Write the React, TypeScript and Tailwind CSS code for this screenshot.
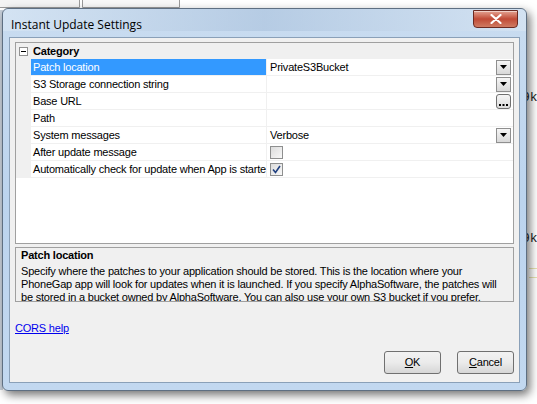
import React from 'react';

const rows = [
  { label: 'Patch location', value: 'PrivateS3Bucket', kind: 'drop', selected: true },
  { label: 'S3 Storage connection string', value: '', kind: 'drop' },
  { label: 'Base URL', value: '', kind: 'dots' },
  { label: 'Path', value: '', kind: 'none' },
  { label: 'System messages', value: 'Verbose', kind: 'drop' },
  { label: 'After update message', value: '', kind: 'check' },
  { label: 'Automatically check for update when App is started', value: '', kind: 'checked' },
];

const description = [
  'Specify where the patches to your application should be stored. This is the location where your',
  'PhoneGap app will look for updates when it is launched. If you specify AlphaSoftware, the patches will',
  'be stored in a bucket owned by AlphaSoftware. You can also use your own S3 bucket if you prefer.',
];

function DropButton() {
  return (
    <div className="ml-auto mr-[2px] flex h-[15px] w-[15px] items-center justify-center border border-[#8f8f8f] bg-gradient-to-b from-[#f6f6f6] to-[#d8d8d8]">
      <svg width="7" height="4" viewBox="0 0 7 4">
        <path d="M0 0h7L3.5 4z" fill="#000" />
      </svg>
    </div>
  );
}

function DotsButton() {
  return (
    <div className="ml-auto mr-[2px] flex h-[15px] w-[15px] items-end justify-center rounded-[3px] border border-[#707070] bg-gradient-to-b from-[#f6f6f6] to-[#dcdcdc] pb-[2px]">
      <svg width="9" height="2" viewBox="0 0 9 2">
        <rect x="0" y="0" width="2" height="2" fill="#000" />
        <rect x="3.5" y="0" width="2" height="2" fill="#000" />
        <rect x="7" y="0" width="2" height="2" fill="#000" />
      </svg>
    </div>
  );
}

function CheckBox({ checked }: { checked?: boolean }) {
  return (
    <div className="flex h-[13px] w-[13px] items-center justify-center border border-[#8e8f8f] bg-gradient-to-br from-[#dcdcdc] to-[#f8f8f8]">
      {checked && (
        <svg width="9" height="9" viewBox="0 0 9 9">
          <path d="M1 4.5l2.5 3L8 1" stroke="#1f3f7f" strokeWidth="1.6" fill="none" />
        </svg>
      )}
    </div>
  );
}

export default function App() {
  return (
    <div className="relative h-[404px] w-[537px] overflow-hidden bg-white text-[11px] tracking-[-0.2px] text-black [font-family:'Liberation_Sans',Arial,sans-serif]">
      {/* background tabs */}
      <div className="absolute left-[-2px] top-[-6px] h-[14px] w-[82px] rounded-t-[3px] border border-[#9a9a9a] bg-[#f4f4f4]" />
      <div className="absolute left-[82px] top-[-4px] h-[12px] w-[98px] rounded-t-[3px] border border-[#9a9a9a] bg-[#f8f8f8]" />
      <div className="absolute left-0 top-[10px] h-[380px] w-[3px] bg-[#c8d0da]" />

      {/* background app text on the right, partly under the window */}
      <div className="absolute left-[522px] top-[88px] text-[13px] tracking-normal text-[#222] [font-family:'Liberation_Mono',monospace]">9k</div>
      <div className="absolute left-[522px] top-[229px] text-[13px] tracking-normal text-[#222] [font-family:'Liberation_Mono',monospace]">9k</div>
      <div className="absolute left-[529px] top-[268px] h-[10px] w-[10px] border-y border-[#e8e4b0]" />

      {/* window */}
      <div className="absolute left-[2px] top-[8px] flex h-[383px] w-[525px] flex-col rounded-[6px] border border-[#5e6f82] bg-gradient-to-b from-[#c9dcf0] via-[#bcd4ee] to-[#c2d8f0] px-[6px] pb-[7px] shadow-[3px_4px_10px_rgba(0,0,0,0.55)]">
        {/* title bar */}
        <div className="relative flex h-[28px] shrink-0 items-center pl-[2px] pt-[3px]">
          <div className="absolute inset-x-[-6px] top-0 h-[22px] rounded-t-[6px] bg-gradient-to-r from-[#d8e6f4] via-[#aec5df] to-[#d7e5f3] opacity-70" />
          <span className="relative text-[12px] tracking-normal text-[#000] [font-family:'Open_Sans','Liberation_Sans',sans-serif]">Instant Update Settings</span>
          <div className="absolute right-[2px] top-[1px] flex h-[18px] w-[45px] items-center justify-center rounded-b-[4px] border border-[#6b2a22] bg-gradient-to-b from-[#e3a393] via-[#c04a36] to-[#cf7a62] shadow-[inset_0_1px_0_rgba(255,255,255,0.5)]">
            <svg width="12" height="10" viewBox="0 0 12 10">
              <path d="M1.5 1l9 8M10.5 1l-9 8" stroke="#fff" strokeWidth="2.2" strokeLinecap="round" />
            </svg>
          </div>
        </div>

        {/* client area */}
        <div className="flex flex-1 flex-col border border-[#8aa0b8] bg-[#f0f0f0] px-[5px] pt-[4px]">
          {/* property grid */}
          <div className="flex h-[202px] flex-col border border-[#a0a0a0] bg-white">
            <div className="flex h-[16px] items-center bg-[#f0f0f0]">
              <div className="flex w-[15px] justify-center">
                <div className="flex h-[9px] w-[9px] items-center justify-center border border-[#919191] bg-white">
                  <div className="h-px w-[5px] bg-black" />
                </div>
              </div>
              <span className="pl-[2px] font-bold">Category</span>
            </div>
            {rows.map((r, i) => (
              <div key={i} className="flex h-[17px]">
                <div className="w-[15px] bg-[#f0f0f0]" />
                <div
                  className={`flex w-[236px] items-center overflow-hidden whitespace-nowrap border-b border-r border-[#f0f0f0] pl-[2px] ${
                    r.selected ? 'bg-[#3399ff] text-white' : ''
                  }`}
                >
                  {r.label}
                </div>
                <div className="flex flex-1 items-center border-b border-[#f0f0f0] pl-[3px]">
                  {r.value && <span>{r.value}</span>}
                  {r.kind === 'drop' && <DropButton />}
                  {r.kind === 'dots' && <DotsButton />}
                  {r.kind === 'check' && <CheckBox />}
                  {r.kind === 'checked' && <CheckBox checked />}
                </div>
              </div>
            ))}
          </div>

          {/* description pane */}
          <div className="mt-[3px] h-[55px] overflow-hidden border border-[#a0a0a0] bg-[#f0f0f0] px-[5px] pt-[1px] leading-[13px]">
            <div className="mb-[3px] font-bold">Patch location</div>
            {description.map((line, i) => (
              <div key={i} className="whitespace-nowrap">
                {line}
              </div>
            ))}
          </div>

          <div className="mt-[18px]">
            <a className="text-[#0000ee] underline">CORS help</a>
          </div>

          <div className="mt-[14px] flex justify-end gap-[16px]">
            <button className="h-[23px] w-[57px] rounded-[3px] border border-[#707070] bg-gradient-to-b from-[#f2f2f2] via-[#ebebeb] to-[#d6d6d6] text-[11px]">
              <span className="underline">O</span>K
            </button>
            <button className="h-[23px] w-[57px] rounded-[3px] border border-[#707070] bg-gradient-to-b from-[#f2f2f2] via-[#ebebeb] to-[#d6d6d6] text-[11px]">
              <span className="underline">C</span>ancel
            </button>
          </div>
        </div>
      </div>
    </div>
  );
}
